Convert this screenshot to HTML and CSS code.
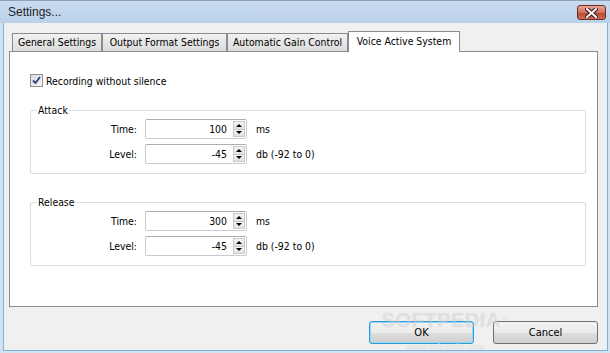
FILE: index.html
```html
<!DOCTYPE html>
<html>
	<head>
		<meta charset="utf-8">
		<title>Settings...</title>
		<link rel="stylesheet" href="styles.css">
	</head>
	<body>
		<div class="window">
			<div class="titlebar">
				<span class="title">Settings...</span>
				<span class="close">
					<svg width="13" height="10" viewBox="0 0 13 10">
						<path d="M2 1 L11 9 M11 1 L2 9" stroke="#3a1a14" stroke-width="4" stroke-linecap="square"/>
						<path d="M2 1 L11 9 M11 1 L2 9" stroke="#fff" stroke-width="2" stroke-linecap="square"/>
					</svg>
				</span>
			</div>
			<div class="client">
				<div class="tabs">
					<div class="tab t1">General Settings</div>
					<div class="tab t2">Output Format Settings</div>
					<div class="tab t3">Automatic Gain Control</div>
					<div class="tab t4 active">Voice Active System</div>
				</div>
				<div class="panel">
					<label class="check">
						<span class="box">
							<svg width="9" height="9" viewBox="0 0 9 9">
								<path d="M1 4.5 L3.5 7 L8 1" fill="none" stroke="#2c3f7a" stroke-width="1.8"/>
							</svg>
						</span>
						Recording without silence
					</label>

					<fieldset class="group">
						<legend>Attack</legend>
						<div class="row">
							<span class="lbl">Time:</span>
							<div class="spin"><span class="val">100</span><span class="arrows"><span class="up"></span><span class="down"></span></span></div>
							<span class="unit">ms</span>
						</div>
						<div class="row">
							<span class="lbl">Level:</span>
							<div class="spin"><span class="val">-45</span><span class="arrows"><span class="up"></span><span class="down"></span></span></div>
							<span class="unit">db (-92 to 0)</span>
						</div>
					</fieldset>

					<fieldset class="group">
						<legend>Release</legend>
						<div class="row">
							<span class="lbl">Time:</span>
							<div class="spin"><span class="val">300</span><span class="arrows"><span class="up"></span><span class="down"></span></span></div>
							<span class="unit">ms</span>
						</div>
						<div class="row">
							<span class="lbl">Level:</span>
							<div class="spin"><span class="val">-45</span><span class="arrows"><span class="up"></span><span class="down"></span></span></div>
							<span class="unit">db (-92 to 0)</span>
						</div>
					</fieldset>
				</div>
				<div class="buttons">
					<div class="btn default">OK</div>
					<div class="btn">Cancel</div>
				</div>
			</div>
			<div class="watermark">
				<span class="wm-big">SOFTPEDIA<sup>™</sup></span>
				<span class="wm-small">www.softpedia.com</span>
			</div>
		</div>
	</body>
</html>
```

FILE: styles.css
```css
* {margin:0; padding:0; box-sizing:border-box; }
body{
	font-family: "DejaVu Sans Condensed", "Liberation Sans", sans-serif;
	font-size: 10.4px;
	color: #000;
	background: #fff;
}
.window{
	width: 610px;
	height: 353px;
	position: relative;
	display: flex;
	flex-direction: column;
	background: #d3e2f1;
	padding: 0 2px 2px 3px;
	overflow: hidden;
}
.titlebar{
	height: 23px;
	margin: 0 -2px 0 -3px;
	padding: 0 4px 0 8px;
	display: flex;
	align-items: center;
	justify-content: space-between;
	background: linear-gradient(#c9dcf0, #bad1ea);
	border-top: 1px solid #8aa3bd;
}
.title{
	font-family: "Liberation Sans", sans-serif;
	font-size: 12px;
	color: #1e1e1e;
}
.close{
	width: 29px;
	height: 15px;
	margin-top: 1px;
	display: flex;
	align-items: center;
	justify-content: center;
	border: 1px solid #6d2e24;
	border-radius: 3px;
	background: linear-gradient(#e8a493, #d0705c 50%, #b94a34 55%, #cf6e55);
}
.client{
	flex: 1;
	display: flex;
	flex-direction: column;
	background: #f0f0f0;
	border: 1px solid #7db2dd;
	border-top: none;
	padding-top: 8px;
}

/* tabs */
.tabs{
	display: flex;
	align-items: flex-end;
	height: 20px;
	margin-left: 8px;
	position: relative;
	z-index: 2;
}
.tab{
	height: 18px;
	line-height: 17px;
	text-align: center;
	white-space: nowrap;
	border: 1px solid #898c95;
	border-bottom: none;
	background: linear-gradient(#f2f2f2, #e6e6e6 50%, #dcdcdc);
}
.t1{width: 90px;}
.t2{width: 125px;}
.t3{width: 121px;}
.t4{width: 112px;}
.tab.active{
	height: 21px;
	margin-bottom: -1px;
	line-height: 18px;
	background: #fff;
}
.panel{
	height: 256px;
	margin: 0 9px 0 5px;
	border: 1px solid #898c95;
	background: #fff;
	padding: 22px 0 0 19px;
	position: relative;
	z-index: 1;
}
.check{
	display: flex;
	align-items: center;
	gap: 3px;
	height: 13px;
	margin-left: 1px;
}
.box{
	width: 13px;
	height: 13px;
	border: 1px solid #8e8f8f;
	background: linear-gradient(135deg, #d6dbe3, #f6f6f6);
	display: flex;
	align-items: center;
	justify-content: center;
}

/* group boxes */
.group{
	width: 556px;
	border: 1px solid #d5dfe5;
	border-radius: 3px;
	padding: 2px 0 9px 0;
	margin: 17px 0 0 1px;
}
.group + .group{
	margin-top: 22px;
}
.group legend{
	margin-left: 6px;
	padding: 0 1px;
	line-height: 13px;
}
.row{
	display: flex;
	align-items: center;
	height: 20px;
}
.row + .row{
	margin-top: 5px;
}
.lbl{
	width: 106px;
	text-align: right;
	margin-right: 8px;
}
.spin{
	width: 102px;
	height: 20px;
	display: flex;
	border: 1px solid #c5ccd4;
	border-top-color: #abadb3;
	border-radius: 2px;
	padding: 1px 1px 1px 0;
}
.val{
	flex: 1;
	text-align: right;
	padding-right: 6px;
	line-height: 17px;
}
.arrows{
	width: 12px;
	display: flex;
	flex-direction: column;
}
.arrows span{
	flex: 1;
	border: 1px solid #c9c9c9;
	background: linear-gradient(#f4f4f4, #e2e2e2);
	display: flex;
	align-items: center;
	justify-content: center;
}
.arrows .down{
	border-top: none;
}
.up::after{
	content: "";
	border-left: 3px solid transparent;
	border-right: 3px solid transparent;
	border-bottom: 3px solid #000;
}
.down::after{
	content: "";
	border-left: 3px solid transparent;
	border-right: 3px solid transparent;
	border-top: 3px solid #000;
}
.unit{
	margin-left: 9px;
}

/* buttons */
.buttons{
	display: flex;
	justify-content: flex-end;
	gap: 19px;
	margin: 14px 9px 0 0;
}
.btn{
	width: 105px;
	height: 23px;
	display: flex;
	align-items: center;
	justify-content: center;
	line-height: 12px;
	padding-top: 1px;
	font-size: 11px;
	border: 1px solid #707070;
	border-radius: 3px;
	background: linear-gradient(#f2f2f2, #ebebeb 50%, #dddddd 51%, #cfcfcf);
}
.btn.default{
	border-color: #3399dd;
	box-shadow: inset 0 0 0 1px #8fd8f8;
}

/* watermark */
.watermark{
	position: absolute;
	left: 378px;
	top: 312px;
	width: 134px;
	display: flex;
	flex-direction: column;
	align-items: center;
	pointer-events: none;
	z-index: 5;
}
.wm-big{
	font-family: "Liberation Sans", sans-serif;
	font-weight: bold;
	font-size: 20px;
	line-height: 16px;
	letter-spacing: 0.5px;
	color: rgba(255,255,255,0.3);
	text-shadow: 0 0 1px rgba(140,140,140,0.3);
}
.wm-big sup{
	font-size: 7px;
	vertical-align: top;
}
.wm-small{
	font-family: "Liberation Sans", sans-serif;
	font-size: 9px;
	line-height: 9px;
	margin-top: 15px;
	color: rgba(255,255,255,0.55);
	text-shadow: 0 0 1px rgba(140,140,140,0.4);
}
```
